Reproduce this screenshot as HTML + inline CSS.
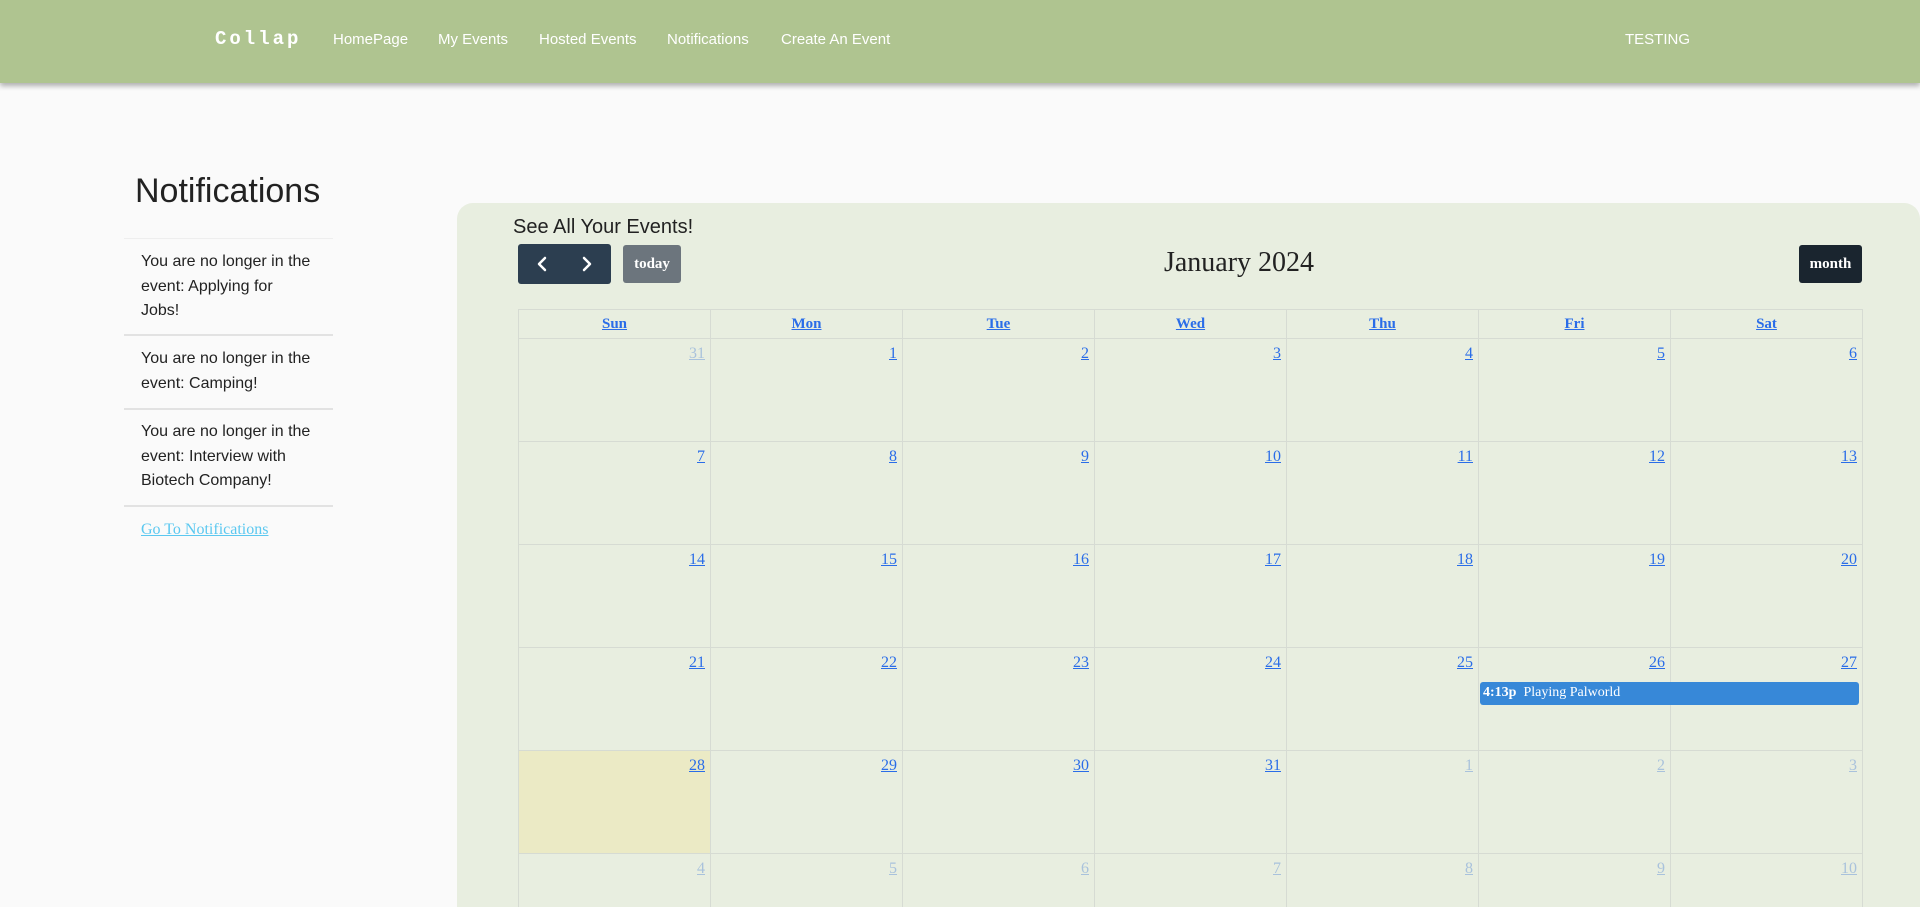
<!DOCTYPE html>
<html><head><meta charset="utf-8"><style>
*{box-sizing:border-box;margin:0;padding:0}
html,body{width:1920px;height:907px;overflow:hidden}
body{background:#fafafa;font-family:"Liberation Sans",Arial,sans-serif}
#w{position:relative;width:1920px;height:907px;overflow:hidden}
.nav{position:absolute;left:0;top:0;width:1920px;height:83px;background:#afc490;box-shadow:0 3px 5px rgba(0,0,0,.3);z-index:2}
.nav span{position:absolute;top:31px;color:#fff;font-size:15px}
.brand{font-family:"Liberation Mono",monospace;font-weight:bold;font-size:19px!important;letter-spacing:3px;top:28px!important}
h1{position:absolute;left:135px;top:172px;font-size:34px;font-weight:normal;color:#222}
.nl{position:absolute;left:124px;width:209px;border-top:2px solid #e2e2e2}
.nt{position:absolute;left:141px;font-size:16px;line-height:24.5px;color:#222;width:172px}
.go{position:absolute;left:141px;top:521px;font-family:"Liberation Serif",serif;font-size:16px;color:#5bc8f0;text-decoration:underline}
.panel{position:absolute;left:457px;top:203px;width:1463px;height:704px;background:#e8eee0;border-radius:16px 16px 0 0}
.see{position:absolute;left:513px;top:216px;font-size:20px;color:#222}
.btn{position:absolute;border-radius:3px;color:#fff;font-family:"Liberation Serif",serif;font-size:15px;font-weight:bold;display:flex;align-items:center;justify-content:center}
.title{position:absolute;left:1039px;width:400px;text-align:center;top:247px;font-family:"Liberation Serif",serif;font-size:28px;color:#222}
table{position:absolute;left:518px;top:309px;border-collapse:collapse;table-layout:fixed;width:1344px;font-family:"Liberation Serif",serif}
td,th{border:1px solid #d6dbd3;width:192px}
th{height:29px;font-size:15px;color:#2a6de8;text-decoration:underline;font-weight:bold}
td{height:103px;vertical-align:top;text-align:right;padding:6px 5px 0 0;font-size:16px;position:relative}
tr.l td{height:55px;border-bottom:none}
td a{color:#2a6de8;text-decoration:underline}
td.o a{color:#a9c2dc}
td.t{background:#ebeac5}
.ev{position:absolute;left:1480px;top:682px;width:379px;height:23px;background:#3788d8;border-radius:3px;color:#fff;font-family:"Liberation Serif",serif;font-size:14px;padding:2px 3px;line-height:18px}
</style></head><body><div id="w">
<div class="nav">
<span class="brand" style="left:215px">Collap</span>
<span style="left:333px">HomePage</span>
<span style="left:438px">My Events</span>
<span style="left:539px">Hosted Events</span>
<span style="left:667px">Notifications</span>
<span style="left:781px">Create An Event</span>
<span style="left:1625px">TESTING</span>
</div>
<h1>Notifications</h1>
<div class="nl" style="top:238px;border-top-width:1px;border-color:#eee"></div>
<div class="nt" style="top:250px">You are no longer in the event: Applying for Jobs!</div>
<div class="nl" style="top:334px"></div>
<div class="nt" style="top:347px">You are no longer in the event: Camping!</div>
<div class="nl" style="top:408px"></div>
<div class="nt" style="top:420px">You are no longer in the event: Interview with Biotech Company!</div>
<div class="nl" style="top:505px"></div>
<div class="go">Go To Notifications</div>
<div class="panel"></div>
<div class="see">See All Your Events!</div>
<div class="btn" style="left:518px;top:244px;width:93px;height:40px;background:#2c3e50">
<svg width="93" height="40"><path d="M27 14l-6 6 6 6M66 14l6 6-6 6" stroke="#fff" stroke-width="2.5" fill="none" stroke-linecap="round" stroke-linejoin="round"/></svg></div>
<div class="btn" style="left:623px;top:245px;width:58px;height:38px;background:#6c757d">today</div>
<div class="title">January 2024</div>
<div class="btn" style="left:1799px;top:245px;width:63px;height:38px;background:#1a252f">month</div>
<table>
<tr><th>Sun</th><th>Mon</th><th>Tue</th><th>Wed</th><th>Thu</th><th>Fri</th><th>Sat</th></tr>
<tr><td class="o"><a>31</a></td><td><a>1</a></td><td><a>2</a></td><td><a>3</a></td><td><a>4</a></td><td><a>5</a></td><td><a>6</a></td></tr>
<tr><td><a>7</a></td><td><a>8</a></td><td><a>9</a></td><td><a>10</a></td><td><a>11</a></td><td><a>12</a></td><td><a>13</a></td></tr>
<tr><td><a>14</a></td><td><a>15</a></td><td><a>16</a></td><td><a>17</a></td><td><a>18</a></td><td><a>19</a></td><td><a>20</a></td></tr>
<tr><td><a>21</a></td><td><a>22</a></td><td><a>23</a></td><td><a>24</a></td><td><a>25</a></td><td><a>26</a></td><td><a>27</a></td></tr>
<tr><td class="t"><a>28</a></td><td><a>29</a></td><td><a>30</a></td><td><a>31</a></td><td class="o"><a>1</a></td><td class="o"><a>2</a></td><td class="o"><a>3</a></td></tr>
<tr class="l"><td class="o"><a>4</a></td><td class="o"><a>5</a></td><td class="o"><a>6</a></td><td class="o"><a>7</a></td><td class="o"><a>8</a></td><td class="o"><a>9</a></td><td class="o"><a>10</a></td></tr>
</table>
<div class="ev"><b>4:13p</b>&nbsp; Playing Palworld</div>
</div></body></html>
